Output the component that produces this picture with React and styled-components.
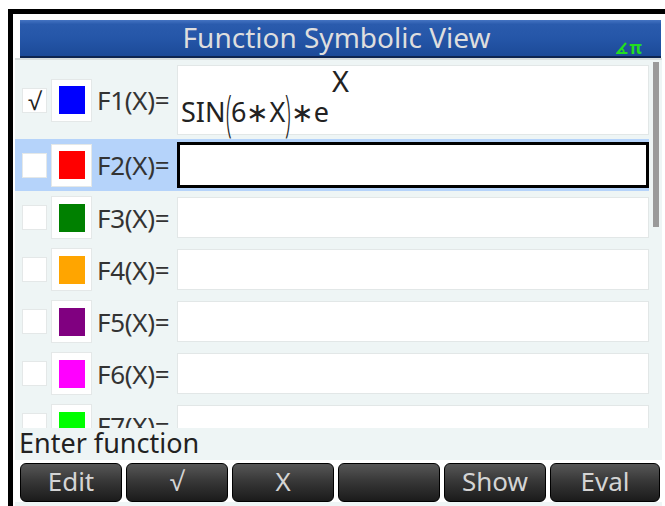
import React from "react";
import styled, { createGlobalStyle } from "styled-components";

const GlobalStyle = createGlobalStyle`
  html, body {
    margin: 0;
    padding: 0;
    background: #ffffff;
  }
  body {
    font-family: "Noto Sans", "Open Sans", sans-serif;
  }
`;

const functions = [
  { name: "F1(X)=", color: "#0000ff", checked: true, tall: true },
  { name: "F2(X)=", color: "#ff0000", selected: true },
  { name: "F3(X)=", color: "#008000" },
  { name: "F4(X)=", color: "#ffa500" },
  { name: "F5(X)=", color: "#800080" },
  { name: "F6(X)=", color: "#ff00ff" },
  { name: "F7(X)=", color: "#00ff00" },
];

const softkeys = ["Edit", "√", "X", "", "Show", "Eval"];

const AngleIcon = () => (
  <svg width="12" height="12" viewBox="0 0 12 12">
    <path d="M10 1 L1.5 11 H11.5" fill="none" stroke="#22dd22" strokeWidth="2.2" />
    <path d="M5.5 6 Q8 8 8 11" fill="none" stroke="#22dd22" strokeWidth="1.8" />
  </svg>
);

const App = () => {
  return (
    <>
      <GlobalStyle />
      <Device>
        <TitleBar>
          <Title>Function Symbolic View</Title>
          <Indicator>
            <AngleIcon />
            <span>π</span>
          </Indicator>
        </TitleBar>
        <Screen>
          <List>
            <Rows>
              {functions.map((f) => (
                <Row key={f.name} tall={f.tall} selected={f.selected}>
                  <Check>{f.checked ? "√" : ""}</Check>
                  <SwatchBox>
                    <Swatch color={f.color} />
                  </SwatchBox>
                  <Label>{f.name}</Label>
                  <Field selected={f.selected}>
                    {f.tall && (
                      <Formula>
                        SIN<Paren>(</Paren>6∗X<Paren>)</Paren>∗e
                        <Sup>X</Sup>
                      </Formula>
                    )}
                  </Field>
                </Row>
              ))}
            </Rows>
            <ScrollTrack>
              <ScrollThumb />
            </ScrollTrack>
          </List>
          <Status>Enter function</Status>
          <SoftBar>
            {softkeys.map((k, i) => (
              <SoftKey key={i} last={i === softkeys.length - 1}>
                {k}
              </SoftKey>
            ))}
          </SoftBar>
        </Screen>
      </Device>
    </>
  );
};

export default App;

const Device = styled.div`
  box-sizing: border-box;
  margin: 9px 0 0 8px;
  width: 657px;
  height: 497px;
  border-left: 5px solid #000;
  border-top: 5px solid #000;
  background: #fff;
  display: flex;
  flex-direction: column;
`;

const TitleBar = styled.div`
  box-sizing: border-box;
  position: relative;
  margin: 6px 4px 0 7px;
  height: 38px;
  background: linear-gradient(#4473c2 0%, #2a5bad 12%, #2556a8 50%, #1c4a98 100%);
  border-bottom: 2px solid #0e2550;
  display: flex;
  align-items: center;
  justify-content: center;
`;

const Title = styled.div`
  color: #dedede;
  font-size: 28px;
  line-height: 1;
  margin-top: -3px;
  margin-left: -8px;
`;

const Indicator = styled.div`
  position: absolute;
  right: 19px;
  bottom: 2px;
  display: flex;
  align-items: flex-end;
  gap: 1px;
  color: #22dd22;
  font-size: 17px;
  font-weight: bold;
  line-height: 13px;
`;

const Screen = styled.div`
  margin-left: 2px;
  width: 647px;
  flex: 1;
  background: #eef5f5;
  border-top: 2px solid #d8dddd;
  display: flex;
  flex-direction: column;
`;

const List = styled.div`
  height: 368px;
  overflow: hidden;
  display: flex;
`;

const Rows = styled.div`
  flex: 1;
  display: flex;
  flex-direction: column;
`;

const Row = styled.div`
  box-sizing: border-box;
  flex: none;
  height: ${({ tall }) => (tall ? "79px" : "52px")};
  padding: ${({ selected, tall }) =>
    selected ? "3px 0 3px 7px" : tall ? "5px 0 4px 7px" : "6px 0 5px 7px"};
  background: ${({ selected }) => (selected ? "#b5d3fa" : "transparent")};
  display: flex;
  align-items: stretch;
`;

const Check = styled.div`
  box-sizing: border-box;
  align-self: center;
  width: 25px;
  height: 25px;
  background: #fff;
  border: 1px solid #e4e8e8;
  color: #222;
  font-size: 24px;
  line-height: 24px;
  text-align: center;
`;

const SwatchBox = styled.div`
  box-sizing: border-box;
  align-self: center;
  margin-left: 4px;
  width: 41px;
  height: 43px;
  background: #fff;
  border: 1px solid #e4e8e8;
  display: flex;
  align-items: center;
  justify-content: center;
`;

const Swatch = styled.div`
  width: 26px;
  height: 28px;
  background: ${({ color }) => color};
`;

const Label = styled.div`
  align-self: center;
  width: 85px;
  padding-left: 5px;
  box-sizing: border-box;
  color: #333;
  font-size: 26px;
  letter-spacing: -0.3px;
  white-space: nowrap;
`;

const Field = styled.div`
  box-sizing: border-box;
  flex: 1;
  background: #fff;
  border: ${({ selected }) => (selected ? "3px solid #000" : "1px solid #e2e7e7")};
  position: relative;
`;

const Formula = styled.div`
  position: absolute;
  left: 3px;
  bottom: 7px;
  color: #222;
  font-size: 27px;
  line-height: 30px;
  white-space: nowrap;
`;

const Paren = styled.span`
  display: inline-block;
  transform: scaleY(1.85) scaleX(0.75);
  font-weight: 300;
  margin: 0 -1px;
`;

const Sup = styled.span`
  position: relative;
  top: -30px;
  margin-left: 3px;
  font-size: 29px;
`;

const ScrollTrack = styled.div`
  width: 13px;
  display: flex;
  justify-content: center;
`;

const ScrollThumb = styled.div`
  margin-top: 2px;
  width: 6px;
  height: 165px;
  background: #9a9a9a;
`;

const Status = styled.div`
  height: 32px;
  padding-left: 4px;
  color: #222;
  font-size: 27px;
  line-height: 30px;
  white-space: nowrap;
`;

const SoftBar = styled.div`
  display: flex;
  gap: 4px;
  padding: 3px 2px 0 5px;
  background: #fff;
`;

const SoftKey = styled.div`
  box-sizing: border-box;
  flex: ${({ last }) => (last ? "1" : "none")};
  width: 102px;
  height: 39px;
  border: 1.5px solid #000;
  border-radius: 6px;
  background: linear-gradient(#575757 0%, #383838 45%, #1b1b1b 100%);
  color: #d4d4d4;
  font-size: 26px;
  line-height: 35px;
  text-align: center;
`;
